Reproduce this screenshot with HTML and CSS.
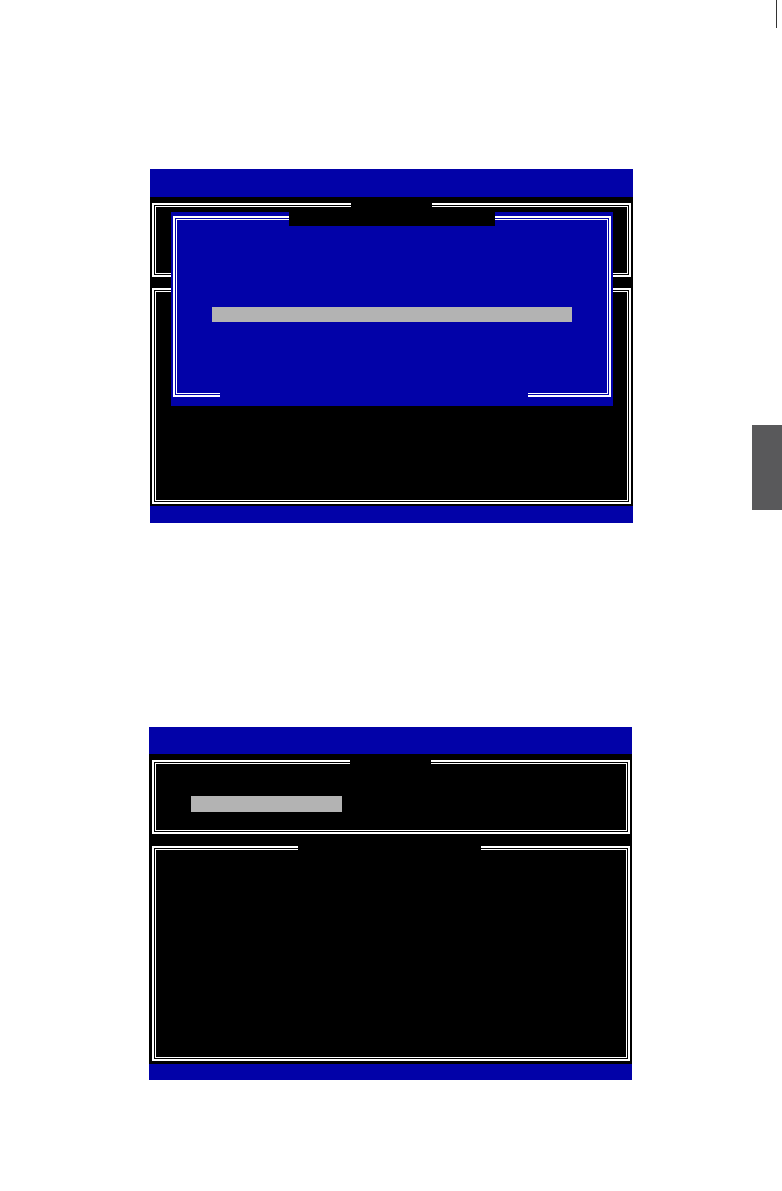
FILE: index.html
```html
<!DOCTYPE html>
<html lang="en">
<head>
<meta charset="utf-8">
<title>BIOS screens</title>
<link rel="stylesheet" href="styles.css">
</head>
<body>
<div class="page">
  <div class="page-mark"></div>

  <section class="screen screen-top">
    <div class="bar bar-head"></div>
    <div class="screen-body">
      <div class="frame frame-upper">
        <span class="tab tab-upper"></span>
      </div>
      <div class="frame frame-lower"></div>
    </div>
    <div class="bar bar-foot"></div>

    <div class="dialog">
      <span class="dialog-title"></span>
      <div class="dialog-frame">
        <div class="select select-dialog"></div>
      </div>
      <span class="dialog-gap"></span>
    </div>
  </section>

  <section class="screen screen-bottom">
    <div class="bar bar-head bar-head-b"></div>
    <div class="screen-body screen-body-b">
      <div class="frame frame-upper frame-upper-b">
        <span class="tab tab-upper-b"></span>
        <div class="select select-menu"></div>
      </div>
      <div class="frame frame-lower frame-lower-b">
        <span class="tab tab-lower-b"></span>
      </div>
    </div>
    <div class="bar bar-foot bar-foot-b"></div>
  </section>

  <div class="thumb-tab"></div>
</div>
</body>
</html>
```

FILE: styles.css
```css
html, body {
  margin: 0;
  padding: 0;
  background: #ffffff;
  font-family: "Liberation Sans", Arial, sans-serif;
}

.page {
  position: relative;
  width: 782px;
  height: 1191px;
  overflow: hidden;
}

.page-mark {
  width: 1px;
  height: 28px;
  margin-left: 776px;
  background: #333333;
}

.screen {
  position: relative;
  width: 483px;
  background: #000;
}

.screen-top {
  margin-top: 141px;
  margin-left: 150px;
}

.screen-bottom {
  margin-top: 204px;
  margin-left: 149px;
}

.bar {
  background: #0202a8;
}

.bar-head { height: 28px; }
.bar-foot { height: 17px; }
.bar-head-b { height: 27px; }
.bar-foot-b { height: 16px; }

.screen-body {
  display: flex;
  flex-direction: column;
  gap: 11px;
  padding: 6px 2px 2px 2px;
  background: #000;
}

.screen-body-b {
  gap: 12px;
  padding: 6px 2px 3px 3px;
}

.frame {
  position: relative;
  box-sizing: border-box;
  border: 2px solid #fff;
  box-shadow: inset 0 0 0 1px #000, inset 0 0 0 2px #fff;
  background: #000;
}

.frame-upper { height: 74px; }
.frame-lower { height: 216px; }
.frame-upper-b { height: 74px; padding: 34px 0 0 37px; }
.frame-lower-b { height: 215px; }

.tab {
  position: absolute;
  top: -3px;
  height: 7px;
  background: #000;
}

.tab-upper { left: 197px; width: 81px; }
.tab-upper-b { left: 196px; width: 81px; }
.tab-lower-b { left: 144px; width: 183px; }

.select {
  background: #b3b3b3;
}

.select-menu {
  width: 151px;
  height: 16px;
}

.dialog {
  position: absolute;
  left: 21px;
  top: 43px;
  width: 442px;
  height: 194px;
  box-sizing: border-box;
  padding: 4px 2px 9px 2px;
  background: #0202a8;
}

.dialog-title {
  position: absolute;
  left: 118px;
  top: 0;
  width: 206px;
  height: 14px;
  background: #000;
}

.dialog-frame {
  height: 100%;
  box-sizing: border-box;
  border: 2px solid #fff;
  box-shadow: inset 0 0 0 1px #0202a8, inset 0 0 0 2px #fff;
  padding: 89px 0 0 37px;
}

.select-dialog {
  width: 360px;
  height: 15px;
}

.dialog-gap {
  position: absolute;
  left: 49px;
  top: 179px;
  width: 308px;
  height: 7px;
  background: #0202a8;
}

.thumb-tab {
  position: absolute;
  right: 0;
  top: 425px;
  width: 30px;
  height: 85px;
  background: #59595b;
}
```
